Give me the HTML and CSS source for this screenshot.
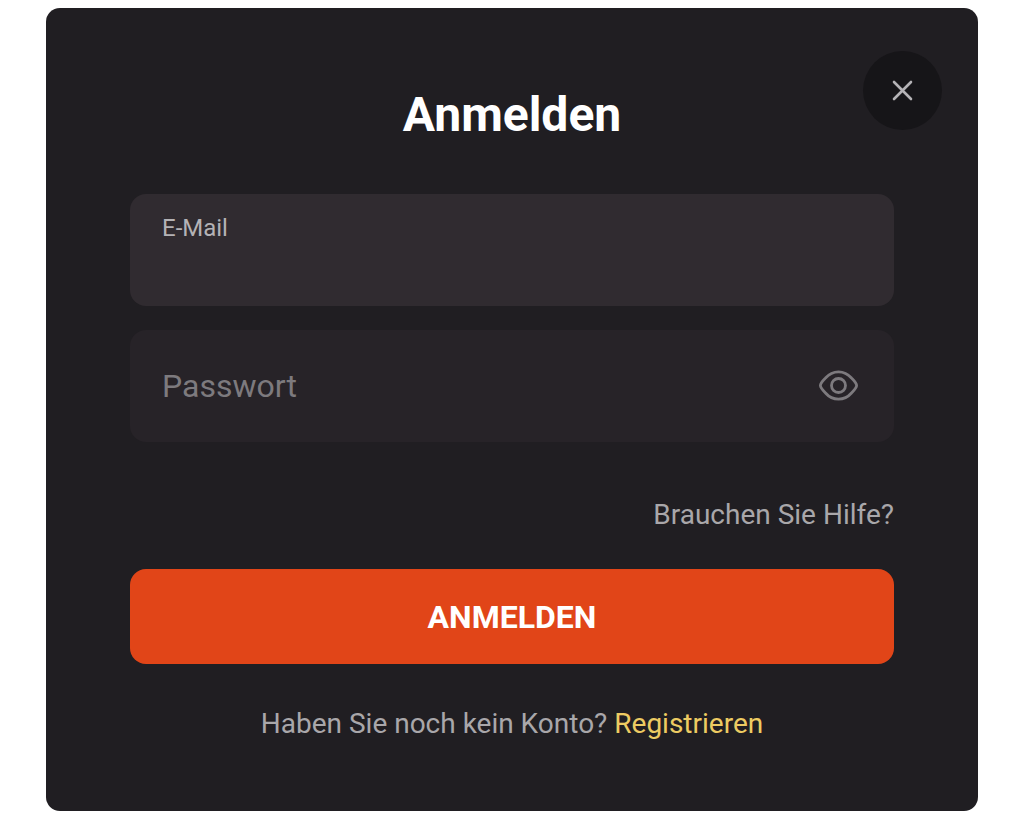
FILE: index.html
```html
<!DOCTYPE html>
<html lang="de">
<head>
    <meta charset="UTF-8">
    <meta name="viewport" content="width=device-width, initial-scale=1.0">
    <title>Anmelden</title>
    <link rel="stylesheet" href="styles.css">
</head>
<body>
    <main class="login-card">
        <button type="button" class="close-button" aria-label="Schließen">
            <svg width="22" height="22" viewBox="0 0 22 22" fill="none" stroke="currentColor" stroke-width="2.6" stroke-linecap="round">
                <path d="M2 2L19 19M19 2L2 19"/>
            </svg>
        </button>

        <h1 class="title">Anmelden</h1>

        <form class="login-form">
            <div class="field field-active">
                <label for="email" class="field-label">E-Mail</label>
                <input type="email" id="email" name="email" class="field-input">
            </div>

            <div class="field field-password">
                <label for="password" class="field-label-large">Passwort</label>
                <input type="password" id="password" name="password" class="field-input">
                <button type="button" class="eye-button" aria-label="Passwort anzeigen">
                    <svg width="40" height="34" viewBox="0 0 40 34" fill="none" stroke="currentColor" stroke-width="2.8">
                        <path d="M2.4 16.5C2.4 14.5 5 11.5 7.5 9C11 5 15.5 2.8 20.5 2.8C25.5 2.8 30 5 33.5 9C36 11.5 38.6 14.5 38.6 16.5C38.6 18.5 36 21.5 33.5 24C30 28 25.5 30.2 20.5 30.2C15.5 30.2 11 28 7.5 24C5 21.5 2.4 18.5 2.4 16.5Z"/>
                        <circle cx="20.5" cy="16.5" r="7"/>
                    </svg>
                </button>
            </div>

            <a href="#" class="help-link">Brauchen Sie Hilfe?</a>

            <button type="submit" class="submit-button">ANMELDEN</button>
        </form>

        <p class="register">Haben Sie noch kein Konto? <a href="#" class="register-link">Registrieren</a></p>
    </main>
</body>
</html>
```

FILE: styles.css
```css
* {
    box-sizing: border-box;
}
body {
    margin: 0;
    padding: 8px 46px;
    background-color: #fff;
    font-family: Roboto, Arial, sans-serif;
    color: #a9a7aa;
}
.login-card {
    position: relative;
    padding: 79px 84px 71px;
    background-color: #201e22;
    border-radius: 14px;
}
/* Round close button over the top right corner */
.close-button {
    position: absolute;
    top: 43px;
    right: 36px;
    display: flex;
    align-items: center;
    justify-content: center;
    width: 79px;
    height: 79px;
    padding: 0;
    border: none;
    border-radius: 50%;
    background-color: #161518;
    color: #b5b3b6;
    cursor: pointer;
}
.title {
    margin: 0 0 51px;
    font-size: 48px;
    line-height: 56px;
    font-weight: 700;
    text-align: center;
    color: #fff;
}
.login-form {
    display: flex;
    flex-direction: column;
}
.field {
    display: flex;
    height: 112px;
    padding: 0 32px;
    border-radius: 16px;
    background-color: #272328;
}
.field-active {
    flex-direction: column;
    padding-top: 20px;
    margin-bottom: 24px;
    background-color: #302b30;
}
.field-password {
    position: relative;
    align-items: center;
    margin-bottom: 57px;
}
.field-label {
    font-size: 24px;
    line-height: 28px;
    color: #b4b2b5;
}
/* Label lies over the empty input and moves away once it is in use */
.field-label-large {
    position: absolute;
    left: 32px;
    font-size: 32px;
    line-height: 40px;
    color: #7d7a7e;
    pointer-events: none;
}
.field-password:focus-within .field-label-large {
    top: 20px;
    font-size: 24px;
    line-height: 28px;
}
.field-input {
    flex: 1;
    min-width: 0;
    padding: 0;
    border: none;
    outline: none;
    background: none;
    font-family: inherit;
    font-size: 32px;
    color: #fff;
}
.eye-button {
    display: flex;
    margin-right: 4px;
    padding: 0;
    border: none;
    background: none;
    color: #7d7a7e;
    cursor: pointer;
}
.help-link {
    align-self: flex-end;
    margin-bottom: 38px;
    font-size: 28px;
    line-height: 32px;
    color: inherit;
    text-decoration: none;
}
.submit-button {
    height: 95px;
    border: none;
    border-radius: 16px;
    background-color: #e14518;
    font-family: inherit;
    font-size: 32px;
    font-weight: 700;
    color: #fff;
    cursor: pointer;
}
.register {
    margin: 44px 0 0;
    font-size: 28px;
    line-height: 32px;
    text-align: center;
}
.register-link {
    color: #edcb62;
    text-decoration: none;
}
```
